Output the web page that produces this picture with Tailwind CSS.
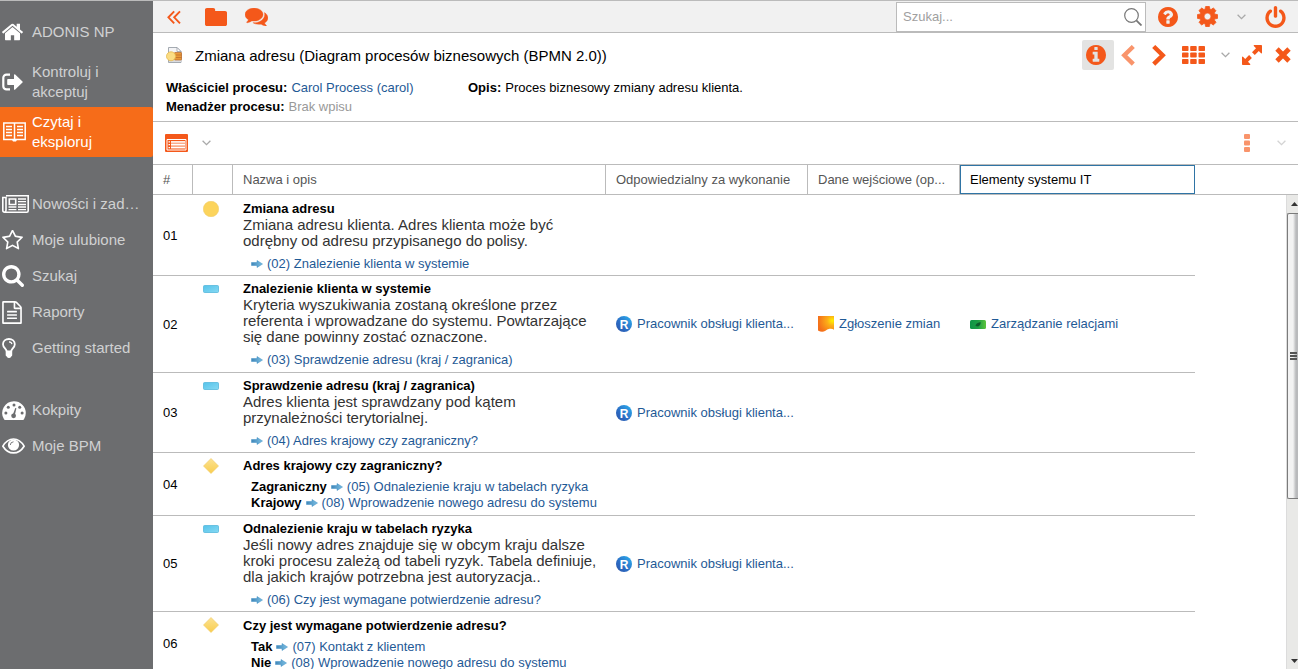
<!DOCTYPE html>
<html lang="pl">
<head>
<meta charset="utf-8">
<title>ADONIS NP</title>
<script src="https://cdn.jsdelivr.net/npm/@tailwindcss/browser@4"></script>
</head>
<body class="flex h-screen overflow-hidden border-t border-[#bbbbbb] bg-white font-['Liberation_Sans',Arial,sans-serif] text-[13px] leading-4 text-black">

<svg class="absolute size-0" aria-hidden="true">
  <defs>
    <linearGradient id="g-arrow" x1="0" x2="1"><stop offset="0" stop-color="#3f86b8"/><stop offset="1" stop-color="#7cc0e4"/></linearGradient>
    <linearGradient id="g-task" x1="0" x2="1" y1="0" y2="1"><stop offset="0" stop-color="#55c3ea"/><stop offset="1" stop-color="#86d9f3"/></linearGradient>
    <linearGradient id="g-gate" x1="0" x2="0" y1="0" y2="1"><stop offset="0" stop-color="#fbe292"/><stop offset="1" stop-color="#f9cd4e"/></linearGradient>
    <linearGradient id="g-role" x1="1" x2="0" y1="0" y2="1"><stop offset="0" stop-color="#2bb4f2"/><stop offset="0.6" stop-color="#2b6cc4"/><stop offset="1" stop-color="#2d55a8"/></linearGradient>
    <radialGradient id="g-doc" cx="0.9" cy="0.3" r="0.9"><stop offset="0" stop-color="#fff200"/><stop offset="0.35" stop-color="#fcaf17"/><stop offset="1" stop-color="#f46f1a"/></radialGradient>
    <linearGradient id="g-app" x1="0" x2="1"><stop offset="0" stop-color="#0d9446"/><stop offset="0.5" stop-color="#1b9f45"/><stop offset="1" stop-color="#5cc43c"/></linearGradient>
    <symbol id="arrow" viewBox="0 0 12 8"><path fill="url(#g-arrow)" stroke="#3f8fc4" stroke-width=".5" d="M.5 2.500h5.500V.5L11.500 4 6 7.500V5.500H.5z"/></symbol>
    <symbol id="task" viewBox="0 0 16 8"><rect x=".5" y=".5" width="15" height="7" rx="1" fill="url(#g-task)" stroke="#56b8dc" stroke-width=".8"/></symbol>
    <symbol id="gate" viewBox="0 0 16 16"><path fill="url(#g-gate)" stroke="#f2cb62" stroke-width=".6" stroke-linejoin="round" d="M8 .5 15.500 8 8 15.500.5 8z"/></symbol>
    <symbol id="role" viewBox="0 0 16 16"><circle cx="8" cy="8" r="8" fill="url(#g-role)"/><text x="8" y="13" text-anchor="middle" font-size="12" font-weight="bold" fill="#fff">R</text></symbol>
    <symbol id="chev" viewBox="0 0 9 6"><path fill="none" stroke="#a9a9a9" stroke-width="1.300" d="M.6.800 4.500 4.700 8.400.800"/></symbol>
  </defs>
</svg>

<nav class="w-[153px] shrink-0 bg-[#6c6d6f] pt-[13px] text-[15px] leading-5 text-[#d0d1d2]" aria-label="Menu">
  <a href="#" class="mb-[7px] flex h-9 items-center">
    <span class="w-8 shrink-0 pl-[2px]"><svg class="h-[18px] w-[21px]" viewBox="90 250 1612 1290" fill="#fff"><path d="M1472 992v480q0 26-19 45t-45 19h-384v-384h-256v384h-384q-26 0-45-19t-19-45v-480q0-1 .5-3t.5-3l575-474 575 474q1 2 1 6zm223-69l-62 74q-8 9-21 11h-3q-13 0-21-7l-692-577-692 577q-12 8-24 7-13-2-21-11l-62-74q-8-10-7-23.500t11-21.500l719-599q32-26 76-26t76 26l244 204v-195q0-14 9-23t23-9h192q14 0 23 9t9 23v408l219 182q10 8 11 21.500t-7 23.500z"/></svg></span>ADONIS NP</a>
  <a href="#" class="flex items-center py-[5px]">
    <span class="w-8 shrink-0 pl-[2px]"><svg class="h-[18px] w-[21px]" viewBox="0 0 21 18"><path fill="none" stroke="#fff" stroke-width="2.200" d="M8 1.600H4.500a3.200 3.200 0 0 0-3.200 3.200v8.400a3.200 3.200 0 0 0 3.200 3.200H8"/><path fill="#fff" d="M6 6h6V1.800q.3-1 1.200-.4l7.300 7q.5.600 0 1.200l-7.300 7q-.9.600-1.200-.4V12H6q-.8 0-.8-.8V6.800Q5.200 6 6 6z"/></svg></span><span>Kontroluj i<br>akceptuj</span></a>
  <a href="#" class="flex items-center rounded-r-xs bg-[#f66c19] py-[5px] text-white" aria-current="page">
    <span class="w-8 shrink-0 pl-[3px]"><svg class="h-5 w-[23px]" viewBox="0 0 23 20"><path fill="none" stroke="#fff" stroke-width="1.500" d="M.8.900h21.400v16.500H.8zM11.500 1v16"/><path fill="#fff" d="M8.500 17h6l-1.500 2.500h-3z"/><path stroke="#fff" stroke-width="1.300" d="M3 4.500h6M3 7.500h6M3 10.500h6M3 13.500h6M14 4.500h6M14 7.500h6M14 10.500h6M14 13.500h6"/></svg></span><span>Czytaj i<br>eksploruj</span></a>
  <a href="#" class="mt-[29px] flex h-9 items-center">
    <span class="w-8 shrink-0 pl-[2px]"><svg class="h-[18px] w-[27px]" viewBox="0 0 27 18"><path fill="none" stroke="#fff" stroke-width="1.600" d="M4 .8h22.200v15q0 1.400-1.400 1.400H2.600Q.8 17.200.8 15.600V2.500H4v12.800q0 1.600-1.400 1.900"/><path fill="none" stroke="#fff" stroke-width="1.600" d="M7.300 4h6.400v5.500H7.300z"/><path stroke="#fff" stroke-width="1.300" d="M16 4h8M16 6.700h8M16 9.500h8M6.500 12h7.900M16 12h8M6.500 14.600h7.900M16 14.600h8"/></svg></span>Nowości i zad…</a>
  <a href="#" class="flex h-9 items-center">
    <span class="w-8 shrink-0 pl-[2px]"><svg class="h-5 w-[21px]" viewBox="64 120 1664 1510" fill="#fff"><path d="M1201 1004l306-297-422-62-189-382-189 382-422 62 306 297-73 421 378-199 377 199zm527-357q0 22-26 48l-363 354 86 500q1 7 1 20 0 50-41 50-19 0-40-12l-449-236-449 236q-22 12-40 12-21 0-31.500-14.500t-10.500-35.500q0-6 2-20l86-500-364-354q-25-27-25-48 0-37 56-46l502-73 225-455q19-41 49-41t49 41l225 455 502 73q56 9 56 46z"/></svg></span>Moje ulubione</a>
  <a href="#" class="flex h-9 items-center">
    <span class="w-8 shrink-0 pl-[2px]"><svg class="size-[22px]" viewBox="64 128 1664 1664" fill="#fff"><path d="M1216 832q0-185-131.500-316.500t-316.500-131.500-316.500 131.500-131.500 316.500 131.500 316.500 316.500 131.500 316.500-131.500 131.500-316.500zm512 832q0 52-38 90t-90 38q-54 0-90-38l-343-342q-179 124-399 124-143 0-273.500-55.500t-225-150-150-225-55.500-273.500 55.500-273.500 150-225 225-150 273.500-55.500 273.500 55.500 225 150 150 225 55.500 273.500q0 220-124 399l343 343q37 37 37 90z"/></svg></span>Szukaj</a>
  <a href="#" class="flex h-9 items-center">
    <span class="w-8 shrink-0 pl-[2px]"><svg class="h-[23px] w-5" viewBox="128 0 1536 1792" fill="#fff"><path d="M1596 380q28 28 48 76t20 88v1152q0 40-28 68t-68 28h-1344q-40 0-68-28t-28-68v-1600q0-40 28-68t68-28h896q40 0 88 20t76 48zm-444-244v376h376q-10-29-22-41l-313-313q-12-12-41-22zm384 1528v-1024h-416q-40 0-68-28t-28-68v-416h-768v1536h1280zm-1024-864q0-14 9-23t23-9h704q14 0 23 9t9 23v64q0 14-9 23t-23 9h-704q-14 0-23-9t-9-23v-64zm736 224q14 0 23 9t9 23v64q0 14-9 23t-23 9h-704q-14 0-23-9t-9-23v-64q0-14 9-23t23-9h704zm0 256q14 0 23 9t9 23v64q0 14-9 23t-23 9h-704q-14 0-23-9t-9-23v-64q0-14 9-23t23-9h704z"/></svg></span>Raporty</a>
  <a href="#" class="flex h-9 items-center">
    <span class="w-8 shrink-0 pl-[2px]"><svg class="h-5 w-[14px]" viewBox="0 0 14 20"><path fill="none" stroke="#fff" stroke-width="1.800" d="M4.600 13.200C4.300 10.800 1 9.500 1 6.200 1 3.200 3.600 1 6.900 1s5.900 2.200 5.900 5.200c0 3.300-3.300 4.600-3.600 7"/><path fill="none" stroke="#fff" stroke-width="1.200" d="M7 3.800q2.600.1 2.900 2.300"/><path fill="#fff" d="M3.700 12.500h6.500v4.700q0 .8-1 1.300-.6 1.500-2.200 1.500T4.800 18.500q-1.100-.5-1.100-1.300z"/></svg></span>Getting started</a>
  <a href="#" class="mt-[26px] flex h-9 items-center">
    <span class="w-8 shrink-0 pl-[2px]"><svg class="h-[19px] w-6" viewBox="0 0 24 19"><path fill="#fff" d="M12 .3A11.800 11.800 0 0 1 23.800 12q0 3.400-1.800 6.300-.4.600-1 .6H3q-.6 0-1-.6A11.800 11.800 0 0 1 12 .3z"/><g fill="#6c6d6f"><circle cx="3.900" cy="12" r="1.500"/><circle cx="6.300" cy="6.300" r="1.500"/><circle cx="12" cy="3.900" r="1.500"/><circle cx="17.700" cy="6.300" r="1.500"/><circle cx="20.100" cy="12" r="1.500"/><circle cx="11.600" cy="14.800" r="2.400"/><path d="m13.300 7 1.100.3-1.600 7-2-.5z"/></g></svg></span>Kokpity</a>
  <a href="#" class="flex h-9 items-center">
    <span class="w-8 shrink-0 pl-[2px]"><svg class="h-4 w-[23px]" viewBox="0 0 23 16"><path fill="none" stroke="#fff" stroke-width="1.700" d="M.9 8.200Q5 1 11.500 1t10.600 7.200Q18 14.900 11.500 14.900T.9 8.200z"/><circle cx="11.500" cy="7" r="5.600" fill="#fff"/><path fill="none" stroke="#6c6d6f" stroke-width=".9" d="M8.300 7q.1-3 3.200-3.200"/></svg></span>Moje BPM</a>
</nav>

<main class="flex min-w-0 flex-1 flex-col">
  <header class="flex h-8 shrink-0 items-center border-b border-[#bbbbbb] bg-[#f1f1f1] pr-3 pl-[14px]">
    <button class="mr-6 block pt-px" aria-label="Zwiń menu"><svg class="h-[15px] w-[14px]" viewBox="0 0 14 15"><path fill="none" stroke="#f4581a" stroke-width="1.900" d="M7.200 1.300 1.400 7.300l5.800 6M13 1.300l-5.800 6 5.800 6"/></svg></button>
    <button class="mr-[18px] block" aria-label="Folder"><svg class="h-[18px] w-[22px]" viewBox="64 128 1664 1408" preserveAspectRatio="none" fill="#f4581a"><path d="M1728 500v892q0 60-42 102t-102 42h-1376q-60 0-102-42t-42-102v-1120q0-60 42-102t102-42h480q60 0 102 42t42 102v84h752q60 0 102 42t42 102z"/></svg></button>
    <button class="block pt-px" aria-label="Komentarze"><svg class="h-[18px] w-[23px]" viewBox="0 256 1792 1408" fill="#f4581a" stroke="#f4581a" stroke-width="30"><path d="M1408 768q0 139-94 257t-256.500 186.500-353.500 68.500q-86 0-176-16-124 88-278 128-36 9-86 16h-3q-11 0-20.500-8t-11.500-21q-1-3-1-6.500t.5-6.500 2-6l2.500-5 3.500-5.500 4-5 4.500-5 4-4.500q5-6 23-25t26-29.500 22.500-29 25-38.500 20.500-44q-124-72-195-177t-71-224q0-139 94-257t256.500-186.500 353.500-68.500 353.500 68.500 256.500 186.500 94 257zm384 256q0 120-71 224.500t-195 176.500q10 24 20.500 44t25 38.500 22.500 29 26 29.500 23 25q1 1 4 4.500t4.500 5 4 5 3.500 5.500l2.500 5 2 6 .5 6.500-1 6.500q-3 14-13 22t-22 7q-50-7-86-16-154-40-278-128-90 16-176 16-271 0-472-132 58 4 88 4 161 0 309-45t264-129q125-92 192-212t67-254q0-77-23-152 129 71 204 178t75 230z"/></svg></button>
    <div class="mr-3 ml-auto flex h-[30px] w-[250px] items-center border border-[#bbbbbb] bg-white pr-[3px] pl-[6px]">
      <input type="text" aria-label="Szukaj" placeholder="Szukaj..." class="min-w-0 flex-1 bg-transparent text-[13px] outline-none placeholder:text-[#a0a0a0]">
      <button class="block" aria-label="Wyszukaj"><svg class="size-[18px]" viewBox="0 0 18 18" fill="none" stroke="#777" stroke-width="1.200"><circle cx="7.500" cy="7.500" r="6.800"/><path stroke-width="1.800" d="m12.300 12.300 5.200 5.200"/></svg></button>
    </div>
    <button class="mr-[19px] block" aria-label="Pomoc"><svg class="size-5" viewBox="128 128 1536 1536" fill="#f4581a"><path d="M1024 1376v-192q0-14-9-23t-23-9h-192q-14 0-23 9t-9 23v192q0 14 9 23t23 9h192q14 0 23-9t9-23zm256-672q0-88-55.500-163t-138.500-116-170-41q-243 0-371 213-15 24 8 42l132 100q7 6 19 6 16 0 25-12 53-68 86-92 34-24 86-24 48 0 85.500 26t37.500 59q0 38-20 61t-68 45q-63 28-115.500 86.500t-52.500 125.500v36q0 14 9 23t23 9h192q14 0 23-9t9-23q0-19 21.500-49.500t54.500-49.500q32-18 49-28.500t46-35 44.500-48 28-60.500 12.500-81zm384 192q0 209-103 385.500t-279.500 279.500-385.500 103-385.500-103-279.500-279.500-103-385.500 103-385.500 279.500-279.500 385.500-103 385.500 103 279.500 279.500 103 385.500z"/></svg></button>
    <button class="mr-[19px] block" aria-label="Ustawienia"><svg class="size-[21px]" viewBox="108 108 1576 1576" fill="#f4581a" stroke="#f4581a" stroke-width="60"><path d="M1152 896q0-106-75-181t-181-75-181 75-75 181 75 181 181 75 181-75 75-181zm512-109v222q0 12-8 23t-20 13l-185 28q-19 54-39 91 35 50 107 138 10 12 10 25t-9 23q-27 37-99 108t-94 71q-12 0-26-9l-138-108q-44 23-91 38-16 136-29 186-7 28-36 28h-222q-14 0-24.500-8.500t-11.500-21.500l-28-184q-49-16-90-37l-141 107q-10 9-25 9-14 0-25-11-126-114-165-168-7-10-7-23 0-12 8-23 15-21 51-66.500t54-70.500q-27-50-41-99l-183-27q-13-2-21-12.500t-8-23.500v-222q0-12 8-23t19-13l186-28q14-46 39-92-40-57-107-138-10-12-10-24 0-10 9-23 26-36 98.500-107.500t94.500-71.500q13 0 26 10l138 107q44-23 91-38 16-136 29-186 7-28 36-28h222q14 0 24.500 8.500t11.500 21.500l28 184q49 16 90 37l142-107q9-9 24-9 13 0 25 10 129 119 165 170 7 8 7 22 0 12-8 23-15 21-51 66.500t-54 70.500q26 50 41 98l183 28q13 2 21 12.500t8 23.500z"/></svg></button>
    <button class="mr-[19px] block" aria-label="Więcej ustawień"><svg class="h-[6px] w-[9px]"><use href="#chev"/></svg></button>
    <button class="block" aria-label="Wyloguj"><svg class="h-[22px] w-[21px]" viewBox="128 0 1536 1664" fill="#f4581a"><path d="M1664 896q0 156-61 298t-164 245-245 164-298 61-298-61-245-164-164-245-61-298q0-182 80.500-343t226.500-270q43-32 95.500-25t83.500 50q32 42 24.500 94.500t-49.500 84.500q-98 74-151.500 181t-53.500 228q0 104 40.500 198.500t109.500 163.500 163.500 109.500 198.500 40.500 198.500-40.500 163.500-109.500 109.500-163.500 40.500-198.500q0-121-53.500-228t-151.500-181q-42-32-49.500-84.500t24.500-94.500q31-43 84-50t95 25q146 109 226.500 270t80.500 343zm-640-768v640q0 52-38 90t-90 38-90-38-38-90v-640q0-52 38-90t90-38 90 38 38 90z"/></svg></button>
  </header>

  <section class="shrink-0 border-b border-[#bbbbbb] pt-[7px] pb-[5px] pl-[13px]">
    <div class="flex h-[30px] items-center pr-[7px]">
      <svg class="mr-[13px] size-4" viewBox="0 0 16 16"><path fill="#f4f4f6" stroke="#9aa0a8" stroke-width=".9" d="M2.500.5h8.500l4 4v11H2.500z"/><path fill="#d9dce1" d="M3 13h12v2H3z"/><path fill="#fff" stroke="#9aa0a8" stroke-width=".8" d="M11 .5v4h4z"/><rect x="8.500" y="5.500" width="7" height="7.500" rx=".5" fill="#e89a3a" stroke="#b9692a" stroke-width=".7"/><path stroke="#b9692a" stroke-width=".7" d="M9 8h6.500M9 10.500h6.500"/><circle cx="5" cy="9.300" r="4.500" fill="#fbdd84" stroke="#e6b94e" stroke-width=".8"/></svg>
      <h1 class="pt-px text-[15px] leading-5">Zmiana adresu (Diagram procesów biznesowych (BPMN 2.0))</h1>
      <button class="mr-[7px] ml-auto flex h-[30px] w-8 items-center rounded-xs bg-[#e3e3e2] pl-1" aria-label="Informacje"><svg class="size-5" viewBox="128 128 1536 1536" fill="#f4581a"><path d="M1152 1376v-160q0-14-9-23t-23-9h-96v-512q0-14-9-23t-23-9h-320q-14 0-23 9t-9 23v160q0 14 9 23t23 9h96v320h-96q-14 0-23 9t-9 23v160q0 14 9 23t23 9h448q14 0 23-9t9-23zm-128-896v-160q0-14-9-23t-23-9h-192q-14 0-23 9t-9 23v160q0 14 9 23t23 9h192q14 0 23-9t9-23zm640 416q0 209-103 385.500t-279.500 279.500-385.500 103-385.500-103-279.500-279.500-103-385.500 103-385.500 279.500-279.500 385.500-103 385.500 103 279.500 279.500 103 385.500z"/></svg></button>
      <button class="mr-[17px] block" aria-label="Poprzedni" disabled><svg class="h-[21px] w-[14px]" viewBox="0 0 14 21"><path fill="none" stroke="#f9946b" stroke-width="4.400" d="M12.300 1.500 3.300 10.300l9 8.800"/></svg></button>
      <button class="mr-4 block" aria-label="Następny"><svg class="h-[21px] w-[14px]" viewBox="0 0 14 21"><path fill="none" stroke="#f4581a" stroke-width="4.400" d="m1.700 1.500 9 8.800-9 8.800"/></svg></button>
      <button class="mr-4 block" aria-label="Widok"><svg class="h-[18px] w-[23px]" viewBox="0 0 23 18" fill="#f4581a"><rect width="6.500" height="5" rx=".8"/><rect x="8.200" width="6.500" height="5" rx=".8"/><rect x="16.500" width="6.500" height="5" rx=".8"/><rect y="6.500" width="6.500" height="5" rx=".8"/><rect x="8.200" y="6.500" width="6.500" height="5" rx=".8"/><rect x="16.500" y="6.500" width="6.500" height="5" rx=".8"/><rect y="13" width="6.500" height="5" rx=".8"/><rect x="8.200" y="13" width="6.500" height="5" rx=".8"/><rect x="16.500" y="13" width="6.500" height="5" rx=".8"/></svg></button>
      <button class="mr-3 block" aria-label="Więcej widoków"><svg class="h-[6px] w-[9px]"><use href="#chev"/></svg></button>
      <button class="mr-[13px] block" aria-label="Pełny ekran"><svg class="size-5" viewBox="0 0 20 20"><path fill="#f4581a" d="M12 0h7.200q.8 0 .8.800V8q-.4.700-1 .2L16.800 6l-4 4L10 7.200l4-4-2.200-2.200q-.4-.6.200-1zM8 20H.8Q0 20 0 19.200V12q.4-.7 1-.2L3.200 14l3.900-3.900 2.800 2.800L6 16.800 8.200 19q.4.600-.2 1z"/></svg></button>
      <button class="block" aria-label="Zamknij"><svg class="size-4" viewBox="0 0 16 16"><path stroke="#f4581a" stroke-width="4.800" d="m2 2 12 12M14 2 2 14"/></svg></button>
    </div>
    <dl class="mt-2 grid grid-cols-[302px_1fr] leading-[19px]">
      <div class="flex gap-1"><dt class="font-bold">Właściciel procesu:</dt><dd><a href="#" class="text-[#1f5a96]">Carol Process (carol)</a></dd></div>
      <div class="flex gap-1"><dt class="font-bold">Opis:</dt><dd>Proces biznesowy zmiany adresu klienta.</dd></div>
      <div class="flex gap-1"><dt class="font-bold">Menadżer procesu:</dt><dd class="text-[#999999]">Brak wpisu</dd></div>
    </dl>
  </section>

  <div class="flex h-[42px] shrink-0 items-center pr-3 pl-3">
    <button class="mr-[14px] block" aria-label="Widok tabeli"><svg class="h-[18px] w-[23px]" viewBox="0 0 23 18"><rect width="23" height="18" rx="1" fill="#f4581a"/><path fill="none" stroke="#fff" d="M2 5.500h19v10.500H2z"/><path stroke="#fff" stroke-width="1.300" d="M3.500 7.800h1.500M6 7.800h14M3.500 10.700h1.500M6 10.700h14M3.500 13.600h1.500M6 13.600h14"/><path fill="#fff" fill-opacity=".5" d="M6 7h14v7.500H6z"/></svg></button>
    <button class="block" aria-label="Więcej widoków tabeli"><svg class="h-[6px] w-[9px]"><use href="#chev"/></svg></button>
    <button class="mr-[27px] ml-auto block" aria-label="Opcje" disabled><svg class="h-[18px] w-[6px]" viewBox="0 0 6 18" fill="#f9946b"><rect width="6" height="5" rx="1"/><rect y="6.500" width="6" height="5" rx="1"/><rect y="13" width="6" height="5" rx="1"/></svg></button>
    <button class="block opacity-50" aria-label="Więcej opcji" disabled><svg class="h-[6px] w-[9px]"><use href="#chev"/></svg></button>
  </div>

  <div class="relative min-h-0 flex-1 overflow-hidden border-t border-[#bbbbbb]">
    <table class="w-full table-fixed border-separate border-spacing-0 text-left">
      <colgroup><col class="w-10"><col class="w-10"><col class="w-[373px]"><col class="w-[202px]"><col class="w-[152px]"><col class="w-[235px]"><col></colgroup>
      <thead class="text-[#555555]">
        <tr class="h-[30px] *:border-b *:border-[#bbbbbb] *:font-normal">
          <th class="border-r pl-[10px]">#</th>
          <th class="border-r" aria-label="Typ"></th>
          <th class="border-r pl-[10px]">Nazwa i opis</th>
          <th class="border-r pl-[10px]">Odpowiedzialny za wykonanie</th>
          <th class="border-r pl-[10px]">Dane wejściowe (op...</th>
          <th class="p-0 text-black"><div class="flex h-[29px] items-center border border-[#2f74a5] pl-[9px]">Elementy systemu IT</div></th>
          <th aria-hidden="true"></th>
        </tr>
      </thead>
      <tbody>
        <tr class="h-[81px] *:not-last:border-b *:border-[#bbbbbb]">
          <td class="pt-[2px] pl-[10px]">01</td>
          <td class="pt-[6px] pl-[10px] align-top"><svg class="size-4" viewBox="0 0 16 16"><circle cx="8" cy="8" r="7.700" fill="#fcd45c" stroke="#f0cc6a" stroke-width=".6"/></svg></td>
          <td class="pt-[6px] pb-[3px] pl-[10px] align-top">
            <b class="block">Zmiana adresu</b>
            <p class="text-[15px] text-[#333333]">Zmiana adresu klienta. Adres klienta może być<br>odrębny od adresu przypisanego do polisy.</p>
            <a href="#" class="mt-[7px] flex items-center gap-1 pl-2 text-[#1f5a96]"><svg class="h-2 w-3"><use href="#arrow"/></svg>(02) Znalezienie klienta w systemie</a>
          </td>
          <td></td><td></td><td></td><td></td>
        </tr>
        <tr class="h-[97px] *:not-last:border-b *:border-[#bbbbbb]">
          <td class="pt-[2px] pl-[10px]">02</td>
          <td class="pt-[9px] pl-[10px] align-top"><svg class="h-2 w-4"><use href="#task"/></svg></td>
          <td class="pt-[5px] pb-[3px] pl-[10px] align-top">
            <b class="block">Znalezienie klienta w systemie</b>
            <p class="text-[15px] text-[#333333]">Kryteria wyszukiwania zostaną określone przez<br>referenta i wprowadzane do systemu. Powtarzające<br>się dane powinny zostać oznaczone.</p>
            <a href="#" class="mt-[7px] flex items-center gap-1 pl-2 text-[#1f5a96]"><svg class="h-2 w-3"><use href="#arrow"/></svg>(03) Sprawdzenie adresu (kraj / zagranica)</a>
          </td>
          <td class="pl-[10px]"><a href="#" class="flex items-center gap-[5px] text-[#1f5a96]"><svg class="size-4"><use href="#role"/></svg>Pracownik obsługi klienta...</a></td>
          <td class="pl-[10px]"><a href="#" class="flex items-center gap-[5px] text-[#1f5a96]"><svg class="size-4" viewBox="0 0 16 16"><path fill="url(#g-doc)" d="M0 0h16v13.800q-2-1.600-4.500-1t-4 2Q4 16.800 0 14.500z"/></svg>Zgłoszenie zmian</a></td>
          <td class="pl-[10px]"><a href="#" class="flex items-center gap-[5px] text-[#1f5a96]"><svg class="size-4" viewBox="0 0 16 16"><rect y="4" width="16" height="9" rx="1.500" fill="url(#g-app)"/><path fill="#0b5c2c" d="M5.500 10q0-3 5-4 .5 3-2.500 4.500z"/></svg>Zarządzanie relacjami</a></td>
          <td></td>
        </tr>
        <tr class="*:not-last:border-b *:border-[#bbbbbb]">
          <td class="pl-[10px]">03</td>
          <td class="pt-[9px] pl-[10px] align-top"><svg class="h-2 w-4"><use href="#task"/></svg></td>
          <td class="pt-[5px] pb-[3px] pl-[10px] align-top">
            <b class="block">Sprawdzenie adresu (kraj / zagranica)</b>
            <p class="text-[15px] text-[#333333]">Adres klienta jest sprawdzany pod kątem<br>przynależności terytorialnej.</p>
            <a href="#" class="mt-[7px] flex items-center gap-1 pl-2 text-[#1f5a96]"><svg class="h-2 w-3"><use href="#arrow"/></svg>(04) Adres krajowy czy zagraniczny?</a>
          </td>
          <td class="pl-[10px]"><a href="#" class="flex items-center gap-[5px] text-[#1f5a96]"><svg class="size-4"><use href="#role"/></svg>Pracownik obsługi klienta...</a></td>
          <td></td><td></td><td></td>
        </tr>
        <tr class="h-[63px] *:not-last:border-b *:border-[#bbbbbb]">
          <td class="pt-[2px] pl-[10px]">04</td>
          <td class="pt-[5px] pl-[10px] align-top"><svg class="size-4"><use href="#gate"/></svg></td>
          <td class="pt-[5px] pb-[3px] pl-[10px] align-top">
            <b class="block">Adres krajowy czy zagraniczny?</b>
            <a href="#" class="mt-[5px] flex items-center gap-1 pl-2 text-[#1f5a96]"><b class="text-black">Zagraniczny</b><svg class="h-2 w-3"><use href="#arrow"/></svg>(05) Odnalezienie kraju w tabelach ryzyka</a>
            <a href="#" class="flex items-center gap-1 pl-2 text-[#1f5a96]"><b class="text-black">Krajowy</b><svg class="h-2 w-3"><use href="#arrow"/></svg>(08) Wprowadzenie nowego adresu do systemu</a>
          </td>
          <td></td><td></td><td></td><td></td>
        </tr>
        <tr class="*:not-last:border-b *:border-[#bbbbbb]">
          <td class="pl-[10px]">05</td>
          <td class="pt-[9px] pl-[10px] align-top"><svg class="h-2 w-4"><use href="#task"/></svg></td>
          <td class="pt-[5px] pb-[3px] pl-[10px] align-top">
            <b class="block">Odnalezienie kraju w tabelach ryzyka</b>
            <p class="text-[15px] text-[#333333]">Jeśli nowy adres znajduje się w obcym kraju dalsze<br>kroki procesu zależą od tabeli ryzyk. Tabela definiuje,<br>dla jakich krajów potrzebna jest autoryzacja..</p>
            <a href="#" class="mt-[7px] flex items-center gap-1 pl-2 text-[#1f5a96]"><svg class="h-2 w-3"><use href="#arrow"/></svg>(06) Czy jest wymagane potwierdzenie adresu?</a>
          </td>
          <td class="pl-[10px]"><a href="#" class="flex items-center gap-[5px] text-[#1f5a96]"><svg class="size-4"><use href="#role"/></svg>Pracownik obsługi klienta...</a></td>
          <td></td><td></td><td></td>
        </tr>
        <tr class="h-[63px] *:not-last:border-b *:border-[#bbbbbb]">
          <td class="pt-[2px] pl-[10px]">06</td>
          <td class="pt-[5px] pl-[10px] align-top"><svg class="size-4"><use href="#gate"/></svg></td>
          <td class="pt-[6px] pb-[3px] pl-[10px] align-top">
            <b class="block">Czy jest wymagane potwierdzenie adresu?</b>
            <a href="#" class="mt-[5px] flex items-center gap-1 pl-2 text-[#1f5a96]"><b class="text-black">Tak</b><svg class="h-2 w-3"><use href="#arrow"/></svg>(07) Kontakt z klientem</a>
            <a href="#" class="flex items-center gap-1 pl-2 text-[#1f5a96]"><b class="text-black">Nie</b><svg class="h-2 w-3"><use href="#arrow"/></svg>(08) Wprowadzenie nowego adresu do systemu</a>
          </td>
          <td></td><td></td><td></td><td></td>
        </tr>
      </tbody>
    </table>

    <!-- vertical scrollbar, below the header row -->
    <div class="absolute top-[30px] right-0 bottom-0 flex w-3 flex-col border-l border-[#dcdcdc] bg-[#e9e9e7]" aria-hidden="true">
      <div class="flex h-[18px] items-center justify-center pl-1"><svg class="h-1 w-[7px]" viewBox="0 0 7 4" fill="#333"><path d="M3.500 0 7 4H0z"/></svg></div>
      <div class="flex h-[286px] flex-col items-center justify-center gap-px rounded-l-xs border border-r-0 border-[#7b7b7b] bg-linear-to-r from-[#f3f3f3] from-50% to-[#b9babc] to-80%">
        <span class="h-[2px] w-[7px] bg-[#555555]"></span><span class="h-[2px] w-[7px] bg-[#555555]"></span><span class="h-[2px] w-[7px] bg-[#555555]"></span>
      </div>
      <div class="mt-auto flex h-4 items-center justify-center pl-1"><svg class="h-1 w-[7px]" viewBox="0 0 7 4" fill="#333"><path d="M3.500 4 7 0H0z"/></svg></div>
    </div>
  </div>
</main>
</body>
</html>
